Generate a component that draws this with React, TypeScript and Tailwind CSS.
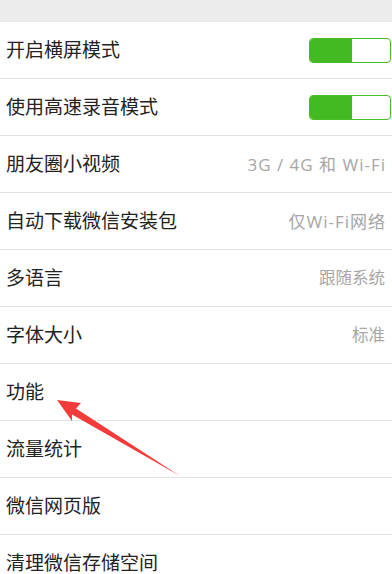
const font = { fontFamily: '"Liberation Sans", "Noto Sans CJK SC", sans-serif' };
const valueFont = { fontFamily: '"Open Sans", "Noto Sans CJK SC", sans-serif' };

type Row = { label: string; value?: string; wide?: boolean; toggle?: boolean };

const rows: Row[] = [
  { label: "开启横屏模式", toggle: true },
  { label: "使用高速录音模式", toggle: true },
  { label: "朋友圈小视频", value: "3G / 4G 和 Wi-Fi", wide: true },
  { label: "自动下载微信安装包", value: "仅Wi-Fi网络", wide: true },
  { label: "多语言", value: "跟随系统" },
  { label: "字体大小", value: "标准" },
  { label: "功能" },
  { label: "流量统计" },
  { label: "微信网页版" },
  { label: "清理微信存储空间" },
];

function Toggle() {
  return (
    <div className="mr-px flex h-[25px] w-[82px] overflow-hidden rounded-[4px] border border-[#4cbb2a] bg-white">
      <div className="h-full w-[42px] bg-[#44ba22]" />
    </div>
  );
}

export default function App() {
  return (
    <div className="relative h-[574px] w-[392px] overflow-hidden bg-white" style={font}>
      <div className="h-[22px] bg-[#ebebeb]" />
      {rows.map((row) => (
        <div
          key={row.label}
          className="flex h-[57px] items-center justify-between border-b border-[#e2e2e2] pl-[6px]"
        >
          <span className="pt-px text-[19px] leading-none text-[#222]">{row.label}</span>
          {row.toggle && <Toggle />}
          {row.value && (
            <span
              className={
                row.wide
                  ? "pr-[6px] text-[17px] leading-none tracking-[1px] text-[#a6a6a6]"
                  : "pr-[7px] text-[16.5px] leading-none text-[#a6a6a6]"
              }
              style={valueFont}
            >
              {row.value}
            </span>
          )}
        </div>
      ))}

      {/* annotation arrow */}
      <svg className="pointer-events-none absolute left-0 top-0" width="392" height="574">
        <polygon
          points="57,400 81,403 76,408.5 180,476 72,414.5 72,421"
          fill="#f23b3b"
        />
      </svg>
    </div>
  );
}
